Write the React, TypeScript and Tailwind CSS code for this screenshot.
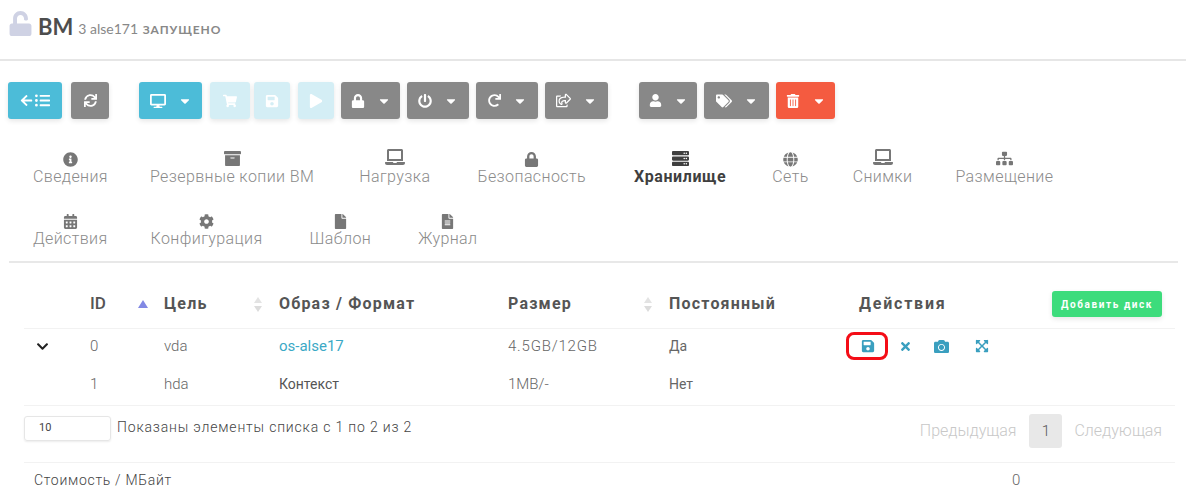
import React from "react";
import { FaArrowLeft, FaListUl, FaSync, FaDesktop, FaShoppingCart, FaSave, FaPlay, FaLock, FaPowerOff, FaRedo, FaRegShareSquare, FaUser, FaTags, FaTrashAlt, FaCaretDown, FaInfoCircle, FaArchive, FaLaptop, FaServer, FaGlobe, FaSitemap, FaCalendarAlt, FaCog, FaFile, FaFileAlt, FaTimes, FaCamera, FaExpandArrowsAlt, FaChevronDown, FaUnlock } from "react-icons/fa";

function Btn({ color, w, children, ml, caret }: { color: string; w: string; children: React.ReactNode; ml?: string; caret?: boolean }) {
  return (
    <div className={`${color} ${w} ${ml ?? ""} h-[37px] rounded-[3px] flex items-center justify-center gap-[12px] text-white shadow-[0_2px_5px_rgba(0,0,0,0.1)] text-[15px]`}>
      {children}
      {caret && <FaCaretDown className="text-[14px]" />}
    </div>
  );
}

function Tab({ icon, label, active, ml }: { icon: React.ReactNode; label: string; active?: boolean; ml?: string }) {
  return (
    <div className={`flex flex-col items-center ${ml ?? ""} ${active ? "text-[#3f3f3f]" : "text-[#8b8b8b]"}`}>
      <div className={`h-[15px] flex items-end text-[15px] ${active ? "text-[#3f3f3f]" : "text-[#777]"}`}>{icon}</div>
      <div className={`text-[16px] leading-[19px] ${active ? "font-bold tracking-[0.6px]" : "font-light tracking-[0.4px]"} whitespace-nowrap`}>{label}</div>
    </div>
  );
}

function Sort({ active }: { active?: boolean }) {
  return active ? (
    <svg width="10" height="8" viewBox="0 0 10 8" className="block"><path d="M5 0l5 8H0z" fill="#8289e4" /></svg>
  ) : (
    <svg width="10" height="15" viewBox="0 0 10 15" className="block"><path d="M5 0l4 6H1z" fill="#e3e3e3" /><path d="M5 15l4-6H1z" fill="#dcdcdc" /></svg>
  );
}

export default function App() {
  const thB = "font-bold text-[#555] text-[16px] tracking-[1.2px]";
  const cols = "grid grid-cols-[66px_74px_115px_229px_161px_190px_1fr] items-center";
  return (
    <div className="w-[1186px] h-[502px] overflow-hidden bg-white font-['Roboto',sans-serif] text-[#555] relative">
      <div className="h-[61px] border-b-2 border-[#e6e6e6] pl-2 flex items-start pt-[10px]">
        <FaUnlock className="text-[#cfd2e4] text-[25px] mt-[1px] shrink-0" />
        <span className="ml-[5px] font-['Lato',sans-serif] font-bold text-[22px] leading-[34px] text-[#4d4d4d]">ВМ</span>
        <span className="ml-[5px] mt-[2px] font-['Lato',sans-serif] text-[14px] leading-[34px] text-[#888]">3 alse171 <span className="font-bold tracking-[0.9px] ml-[1px] text-[12px]">ЗАПУЩЕНО</span></span>
      </div>

      <div className="mt-[21px] pl-2 flex">
        <Btn color="bg-[#4cbcd8]" w="w-[54px]"><span className="flex items-center gap-[2px] text-[13px]"><FaArrowLeft /><FaListUl className="text-[15px]" /></span></Btn>
        <Btn color="bg-[#888888]" w="w-[38px]" ml="ml-[9px]"><FaSync className="text-[13px]" /></Btn>
        <Btn color="bg-[#4cbcd8]" w="w-[63px]" ml="ml-[30px]" caret><FaDesktop className="text-[16px]" /></Btn>
        <Btn color="bg-[#d4eef5]" w="w-[40px]" ml="ml-[8px]"><FaShoppingCart className="text-[14px]" /></Btn>
        <Btn color="bg-[#d4eef5]" w="w-[36px]" ml="ml-[4px]"><FaSave className="text-[14px]" /></Btn>
        <Btn color="bg-[#d4eef5]" w="w-[36px]" ml="ml-[8px]"><FaPlay className="text-[14px]" /></Btn>
        <Btn color="bg-[#888888]" w="w-[59px]" ml="ml-[7px]" caret><FaLock className="text-[14px]" /></Btn>
        <Btn color="bg-[#888888]" w="w-[62px]" ml="ml-[7px]" caret><FaPowerOff className="text-[14px]" /></Btn>
        <Btn color="bg-[#888888]" w="w-[62px]" ml="ml-[7px]" caret><FaRedo className="text-[13px]" /></Btn>
        <Btn color="bg-[#888888]" w="w-[63px]" ml="ml-[7px]" caret><FaRegShareSquare className="text-[15px]" /></Btn>
        <Btn color="bg-[#888888]" w="w-[58px]" ml="ml-[31px]" caret><FaUser className="text-[13px]" /></Btn>
        <Btn color="bg-[#888888]" w="w-[65px]" ml="ml-[7px]" caret><FaTags className="text-[16px]" /></Btn>
        <Btn color="bg-[#f45b40]" w="w-[59px]" ml="ml-[7px]" caret><FaTrashAlt className="text-[14px]" /></Btn>
      </div>

      <div className="mt-[33px] ml-[33px] flex h-[36px]">
        <Tab icon={<FaInfoCircle />} label="Сведения" />
        <Tab ml="ml-[42px]" icon={<FaArchive className="text-[17px]" />} label="Резервные копии ВМ" />
        <Tab ml="ml-[45px]" icon={<FaLaptop className="text-[20px]" />} label="Нагрузка" />
        <Tab ml="ml-[47px]" icon={<FaLock />} label="Безопасность" />
        <Tab ml="ml-[48px]" icon={<FaServer className="text-[17px]" />} label="Хранилище" active />
        <Tab ml="ml-[46px]" icon={<FaGlobe />} label="Сеть" />
        <Tab ml="ml-[44px]" icon={<FaLaptop className="text-[20px]" />} label="Снимки" />
        <Tab ml="ml-[43px]" icon={<FaSitemap className="text-[17px]" />} label="Размещение" />
      </div>
      <div className="mt-[26px] ml-[33px] flex h-[36px]">
        <Tab icon={<FaCalendarAlt />} label="Действия" />
        <Tab ml="ml-[43px]" icon={<FaCog />} label="Конфигурация" />
        <Tab ml="ml-[47px]" icon={<FaFile />} label="Шаблон" />
        <Tab ml="ml-[47px]" icon={<FaFileAlt />} label="Журнал" />
      </div>
      <div className="mt-[11px] ml-[9px] mr-[8px] h-[2px] bg-[#e8e8e8]" />

      <div className="ml-[24px] mr-[11px]">
        <div className={`h-[66px] border-b border-[#f2f2f2] ${cols} pt-[17px]`}>
          <div />
          <div className="flex items-center pr-[16px] justify-between"><span className="text-[#555] text-[17px] font-medium">ID</span><Sort active /></div>
          <div className="flex items-center pr-[16px] justify-between"><span className={thB}>Цель</span><Sort /></div>
          <div className={thB}>Образ / Формат</div>
          <div className="flex items-center pr-[16px] justify-between"><span className={thB}>Размер</span><Sort /></div>
          <div className={thB}>Постоянный</div>
          <div className="flex items-center justify-between pr-[13px]">
            <span className="font-bold text-[#555] text-[16px] tracking-[1.8px]">Действия</span>
            <div className="w-[110px] h-[26px] bg-[#3ddc7c] rounded-[3px] text-white text-[10px] font-bold tracking-[1.6px] flex items-center justify-center shadow-[0_2px_5px_rgba(0,0,0,0.1)]">Добавить диск</div>
          </div>
        </div>
        <div className={`h-[39px] pb-[5px] ${cols} text-[15px] font-light text-[#666]`}>
          <div className="pl-[12px]"><FaChevronDown className="text-[13px] text-[#222]" /></div>
          <div>0</div>
          <div>vda</div>
          <div className="text-[#3ba9c6] font-normal">os-alse17</div>
          <div className="tracking-[0.8px]">4.5GB/12GB</div>
          <div className="font-normal text-[14px] text-[#666]">Да</div>
          <div className="flex items-center -ml-[13px] text-[#3a9fbf]">
            <div className="w-[42px] h-[28px] border-[3px] border-[#f40d17] rounded-[8px] flex items-center justify-center text-[14px] pl-[1px]"><FaSave /></div>
            <FaTimes className="ml-[11px] text-[13px]" />
            <FaCamera className="ml-[22px] text-[15px]" />
            <FaExpandArrowsAlt className="ml-[26px] text-[14px]" />
          </div>
        </div>
        <div className={`h-[38px] pb-[4px] border-b border-[#f2f2f2] ${cols} text-[15px] font-light text-[#666]`}>
          <div />
          <div>1</div>
          <div>hda</div>
          <div className="font-normal text-[14px] text-[#555]">Контекст</div>
          <div>1MB/-</div>
          <div className="font-normal text-[14px] text-[#666]">Нет</div>
          <div />
        </div>
        <div className="h-[57px] border-b border-[#f2f2f2] flex items-start pt-[10px]">
          <div className="w-[87px] h-[25px] border border-[#e6e6e6] rounded-[3px] shadow-[0_1px_2px_rgba(0,0,0,0.08)] text-[11px] flex items-center pl-[14px] text-[#444]">10</div>
          <span className="ml-[6px] mt-[1px] text-[14px] font-light tracking-[0.82px] text-[#444] leading-[20px]">Показаны элементы списка с 1 по 2 из 2</span>
          <div className="ml-auto -mt-[2px] flex items-center pr-[13px] text-[16px] font-light text-[#c8c8c8]">
            <span>Предыдущая</span>
            <span className="ml-[13px] mr-[12px] w-[33px] h-[34px] bg-[#e8e8e8] rounded-[3px] flex items-center justify-center text-[#555] text-[15px]">1</span>
            <span>Следующая</span>
          </div>
        </div>
        <div className="flex h-[35px] items-center text-[14px] font-light tracking-[0.7px] text-[#444]">
          <span className="ml-[10px]">Стоимость / МБайт</span>
          <span className="ml-auto mr-[154px] text-[15px] text-[#666]">0</span>
        </div>
      </div>
    </div>
  );
}
